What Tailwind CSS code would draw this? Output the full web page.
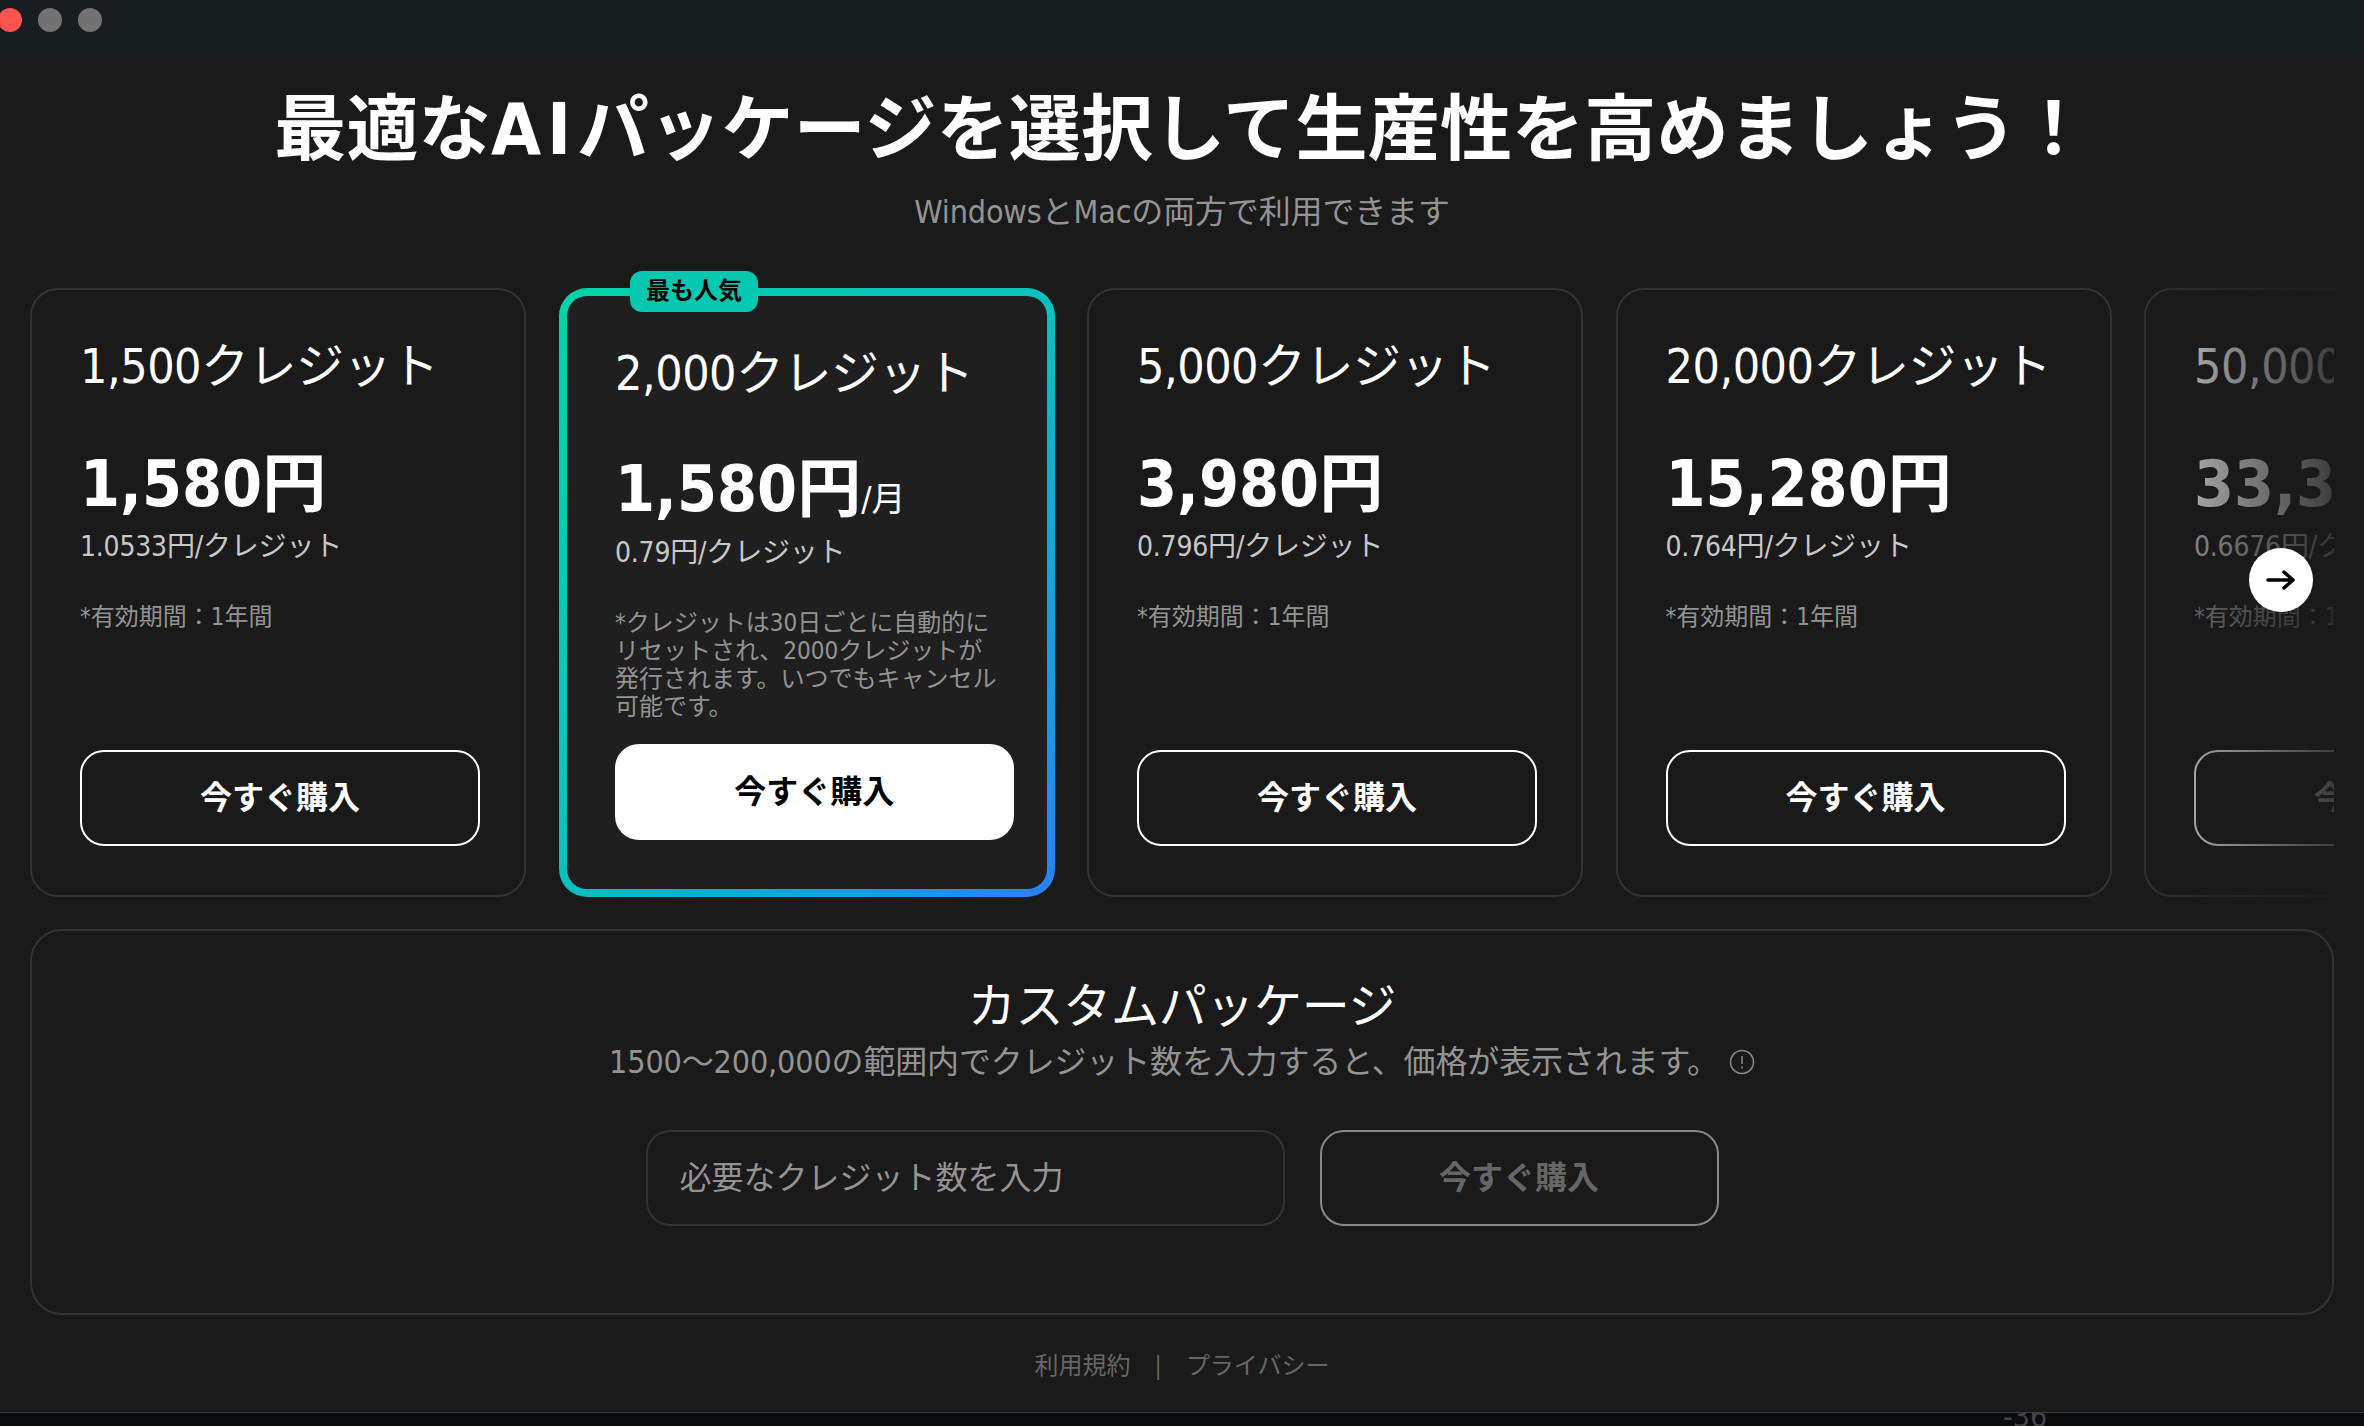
<!DOCTYPE html>
<html lang="ja">
<head>
    <meta charset="UTF-8">
    <title>パッケージ選択</title>
    <script src="https://cdn.jsdelivr.net/npm/@tailwindcss/browser@4"></script>
</head>
<body class="w-[2364px] h-[1426px] overflow-hidden bg-[#1a1a1a] text-white font-['DejaVu_Sans_Condensed','Noto_Sans_CJK_JP',sans-serif] flex flex-col">
    <!-- window title bar -->
    <div class="h-[56px] shrink-0 bg-[#181d20] flex items-center gap-[16px] -ml-[2px] pb-[16px]">
        <span class="w-[24px] h-[24px] rounded-full bg-[#ff5252]"></span>
        <span class="w-[24px] h-[24px] rounded-full bg-[#727272]"></span>
        <span class="w-[24px] h-[24px] rounded-full bg-[#727272]"></span>
    </div>

    <main class="flex-1 flex flex-col px-[30px]">
        <h1 class="mt-[25px] h-[96px] text-center text-[72px] leading-[96px] font-bold tracking-[0.2px] whitespace-nowrap">最適な<span class="tracking-[6px]">AI</span>パッケージを選択して生産性を高めましょう！</h1>
        <p class="mt-[13px] h-[44px] text-center text-[32px] leading-[44px] tracking-[-0.15px] text-[#939393]">WindowsとMacの両方で利用できます</p>

        <!-- package carousel -->
        <div class="relative mt-[37px] h-[626px] shrink-0">
            <div class="flex gap-[32.5px] h-full overflow-hidden pt-[17px] items-start">
                <div class="w-[496px] h-[609px] shrink-0 rounded-[28px] border-2 border-[#333333] pl-[48px] pr-[44px] pt-[42.5px] pb-[49px] flex flex-col">
                    <div class="text-[48px] leading-[66px] tracking-[-0.5px] whitespace-nowrap">1,500クレジット</div>
                    <div class="mt-[47px] text-[64px] leading-[76px] font-bold whitespace-nowrap">1,580円</div>
                    <div class="mt-[5.5px] text-[28px] leading-[40px] tracking-[-0.2px] text-[#c8c8c8] whitespace-nowrap">1.0533円/クレジット</div>
                    <div class="mt-[36px] text-[24px] leading-[28px] text-[#939393]">*有効期間：1年間</div>
                    <button class="mt-auto h-[96px] rounded-[24px] border-2 border-white text-[32px] font-bold">今すぐ購入</button>
                </div>

                <div class="w-[496px] h-[609px] shrink-0 rounded-[28px] p-[8px] bg-gradient-to-br from-[#00d4a6] via-[#0cc0bd] to-[#2a7ff5]">
                    <div class="h-full rounded-[20px] bg-[#1f1f1f] pl-[48.5px] pr-[33px] pt-[43.5px] pb-[49px] flex flex-col">
                        <div class="text-[48px] leading-[66px] tracking-[-0.5px] whitespace-nowrap">2,000クレジット</div>
                        <div class="mt-[45.5px] text-[64px] leading-[76px] font-bold whitespace-nowrap">1,580円<span class="text-[34px] leading-none font-normal">/月</span></div>
                        <div class="mt-[5.5px] text-[28px] leading-[40px] tracking-[-0.2px] text-[#c8c8c8] whitespace-nowrap">0.79円/クレジット</div>
                        <div class="mt-[36px] max-w-[387px] text-[24px] leading-[28px] text-[#939393]">*クレジットは30日ごとに自動的にリセットされ、2000クレジットが発行されます。いつでもキャンセル可能です。</div>
                        <button class="mt-auto h-[96px] shrink-0 rounded-[24px] bg-white text-black text-[32px] font-bold">今すぐ購入</button>
                    </div>
                </div>

                <div class="w-[496px] h-[609px] shrink-0 rounded-[28px] border-2 border-[#333333] pl-[48px] pr-[44px] pt-[42.5px] pb-[49px] flex flex-col">
                    <div class="text-[48px] leading-[66px] tracking-[-0.5px] whitespace-nowrap">5,000クレジット</div>
                    <div class="mt-[47px] text-[64px] leading-[76px] font-bold whitespace-nowrap">3,980円</div>
                    <div class="mt-[5.5px] text-[28px] leading-[40px] tracking-[-0.2px] text-[#c8c8c8] whitespace-nowrap">0.796円/クレジット</div>
                    <div class="mt-[36px] text-[24px] leading-[28px] text-[#939393]">*有効期間：1年間</div>
                    <button class="mt-auto h-[96px] rounded-[24px] border-2 border-white text-[32px] font-bold">今すぐ購入</button>
                </div>

                <div class="w-[496px] h-[609px] shrink-0 rounded-[28px] border-2 border-[#333333] pl-[48px] pr-[44px] pt-[42.5px] pb-[49px] flex flex-col">
                    <div class="text-[48px] leading-[66px] tracking-[-0.5px] whitespace-nowrap">20,000クレジット</div>
                    <div class="mt-[47px] text-[64px] leading-[76px] font-bold whitespace-nowrap">15,280円</div>
                    <div class="mt-[5.5px] text-[28px] leading-[40px] tracking-[-0.2px] text-[#c8c8c8] whitespace-nowrap">0.764円/クレジット</div>
                    <div class="mt-[36px] text-[24px] leading-[28px] text-[#939393]">*有効期間：1年間</div>
                    <button class="mt-auto h-[96px] rounded-[24px] border-2 border-white text-[32px] font-bold">今すぐ購入</button>
                </div>

                <div class="w-[496px] h-[609px] shrink-0 rounded-[28px] border-2 border-[#333333] pl-[48px] pr-[44px] pt-[42.5px] pb-[49px] flex flex-col">
                    <div class="text-[48px] leading-[66px] tracking-[-0.5px] whitespace-nowrap">50,000クレジット</div>
                    <div class="mt-[47px] text-[64px] leading-[76px] font-bold whitespace-nowrap">33,380円</div>
                    <div class="mt-[5.5px] text-[28px] leading-[40px] tracking-[-0.2px] text-[#c8c8c8] whitespace-nowrap">0.6676円/クレジット</div>
                    <div class="mt-[36px] text-[24px] leading-[28px] text-[#939393]">*有効期間：1年間</div>
                    <button class="mt-auto h-[96px] rounded-[24px] border-2 border-white text-[32px] font-bold">今すぐ購入</button>
                </div>
            </div>

            <!-- popular badge, fade and next arrow sit over the carousel -->
            <span class="absolute left-[600px] top-0 w-[128px] h-[41px] rounded-[12px] bg-[#06c8b0] text-black text-[24px] leading-[41px] font-bold text-center">最も人気</span>
            <div class="absolute right-0 top-0 bottom-0 w-[194px] bg-[linear-gradient(to_right,rgba(26,26,26,0)_0px,rgba(26,26,26,0.4)_55px,rgba(26,26,26,0.85)_194px)]"></div>
            <button class="absolute left-[2219px] top-[277px] w-[64px] h-[64px] rounded-full bg-white flex items-center justify-center">
                <svg width="30" height="24" viewBox="0 0 30 24" fill="none" stroke="black" stroke-width="3.5" stroke-linecap="round" stroke-linejoin="round"><path d="M2 12h25M18 4l9 8-9 8"/></svg>
            </button>
        </div>

        <!-- custom package -->
        <section class="mt-[32px] h-[386px] shrink-0 rounded-[32px] border-2 border-[#333333] flex flex-col items-center pt-[42px]">
            <h2 class="text-[48px] leading-[66px] tracking-[-0.3px]">カスタムパッケージ</h2>
            <p class="mt-[1px] text-[32px] leading-[44px] tracking-[-0.15px] text-[#939393] flex items-center gap-[10px] whitespace-nowrap">1500～200,000の範囲内でクレジット数を入力すると、価格が表示されます。
                <svg width="26" height="26" viewBox="0 0 26 26" fill="none" stroke="#8a8a8a" stroke-width="1.5"><circle cx="13" cy="13" r="11.5"/><path d="M13 7v8M13 17.5v2"/></svg>
            </p>
            <div class="mt-[46px] flex gap-[35px]">
                <div class="w-[639px] h-[96px] rounded-[24px] border-2 border-[#333333] pl-[32px] flex items-center text-[32px] text-[#939393]">必要なクレジット数を入力</div>
                <button class="w-[399px] h-[96px] rounded-[24px] border-2 border-[#888888] text-[32px] font-bold text-[#666666]">今すぐ購入</button>
            </div>
        </section>

        <footer class="mt-[33px] flex justify-center items-center text-[24px] text-[#666666] gap-[24px]">
            <span>利用規約</span><span>|</span><span>プライバシー</span>
        </footer>
    </main>

    <div class="h-[14px] shrink-0 border-t border-[#3a3a3a] bg-[#0b0c0d] overflow-hidden pl-[2003px]">
        <span class="block -mt-[12px] text-[30px] leading-[32px] text-[#444444]">-36</span>
    </div>
</body>
</html>
